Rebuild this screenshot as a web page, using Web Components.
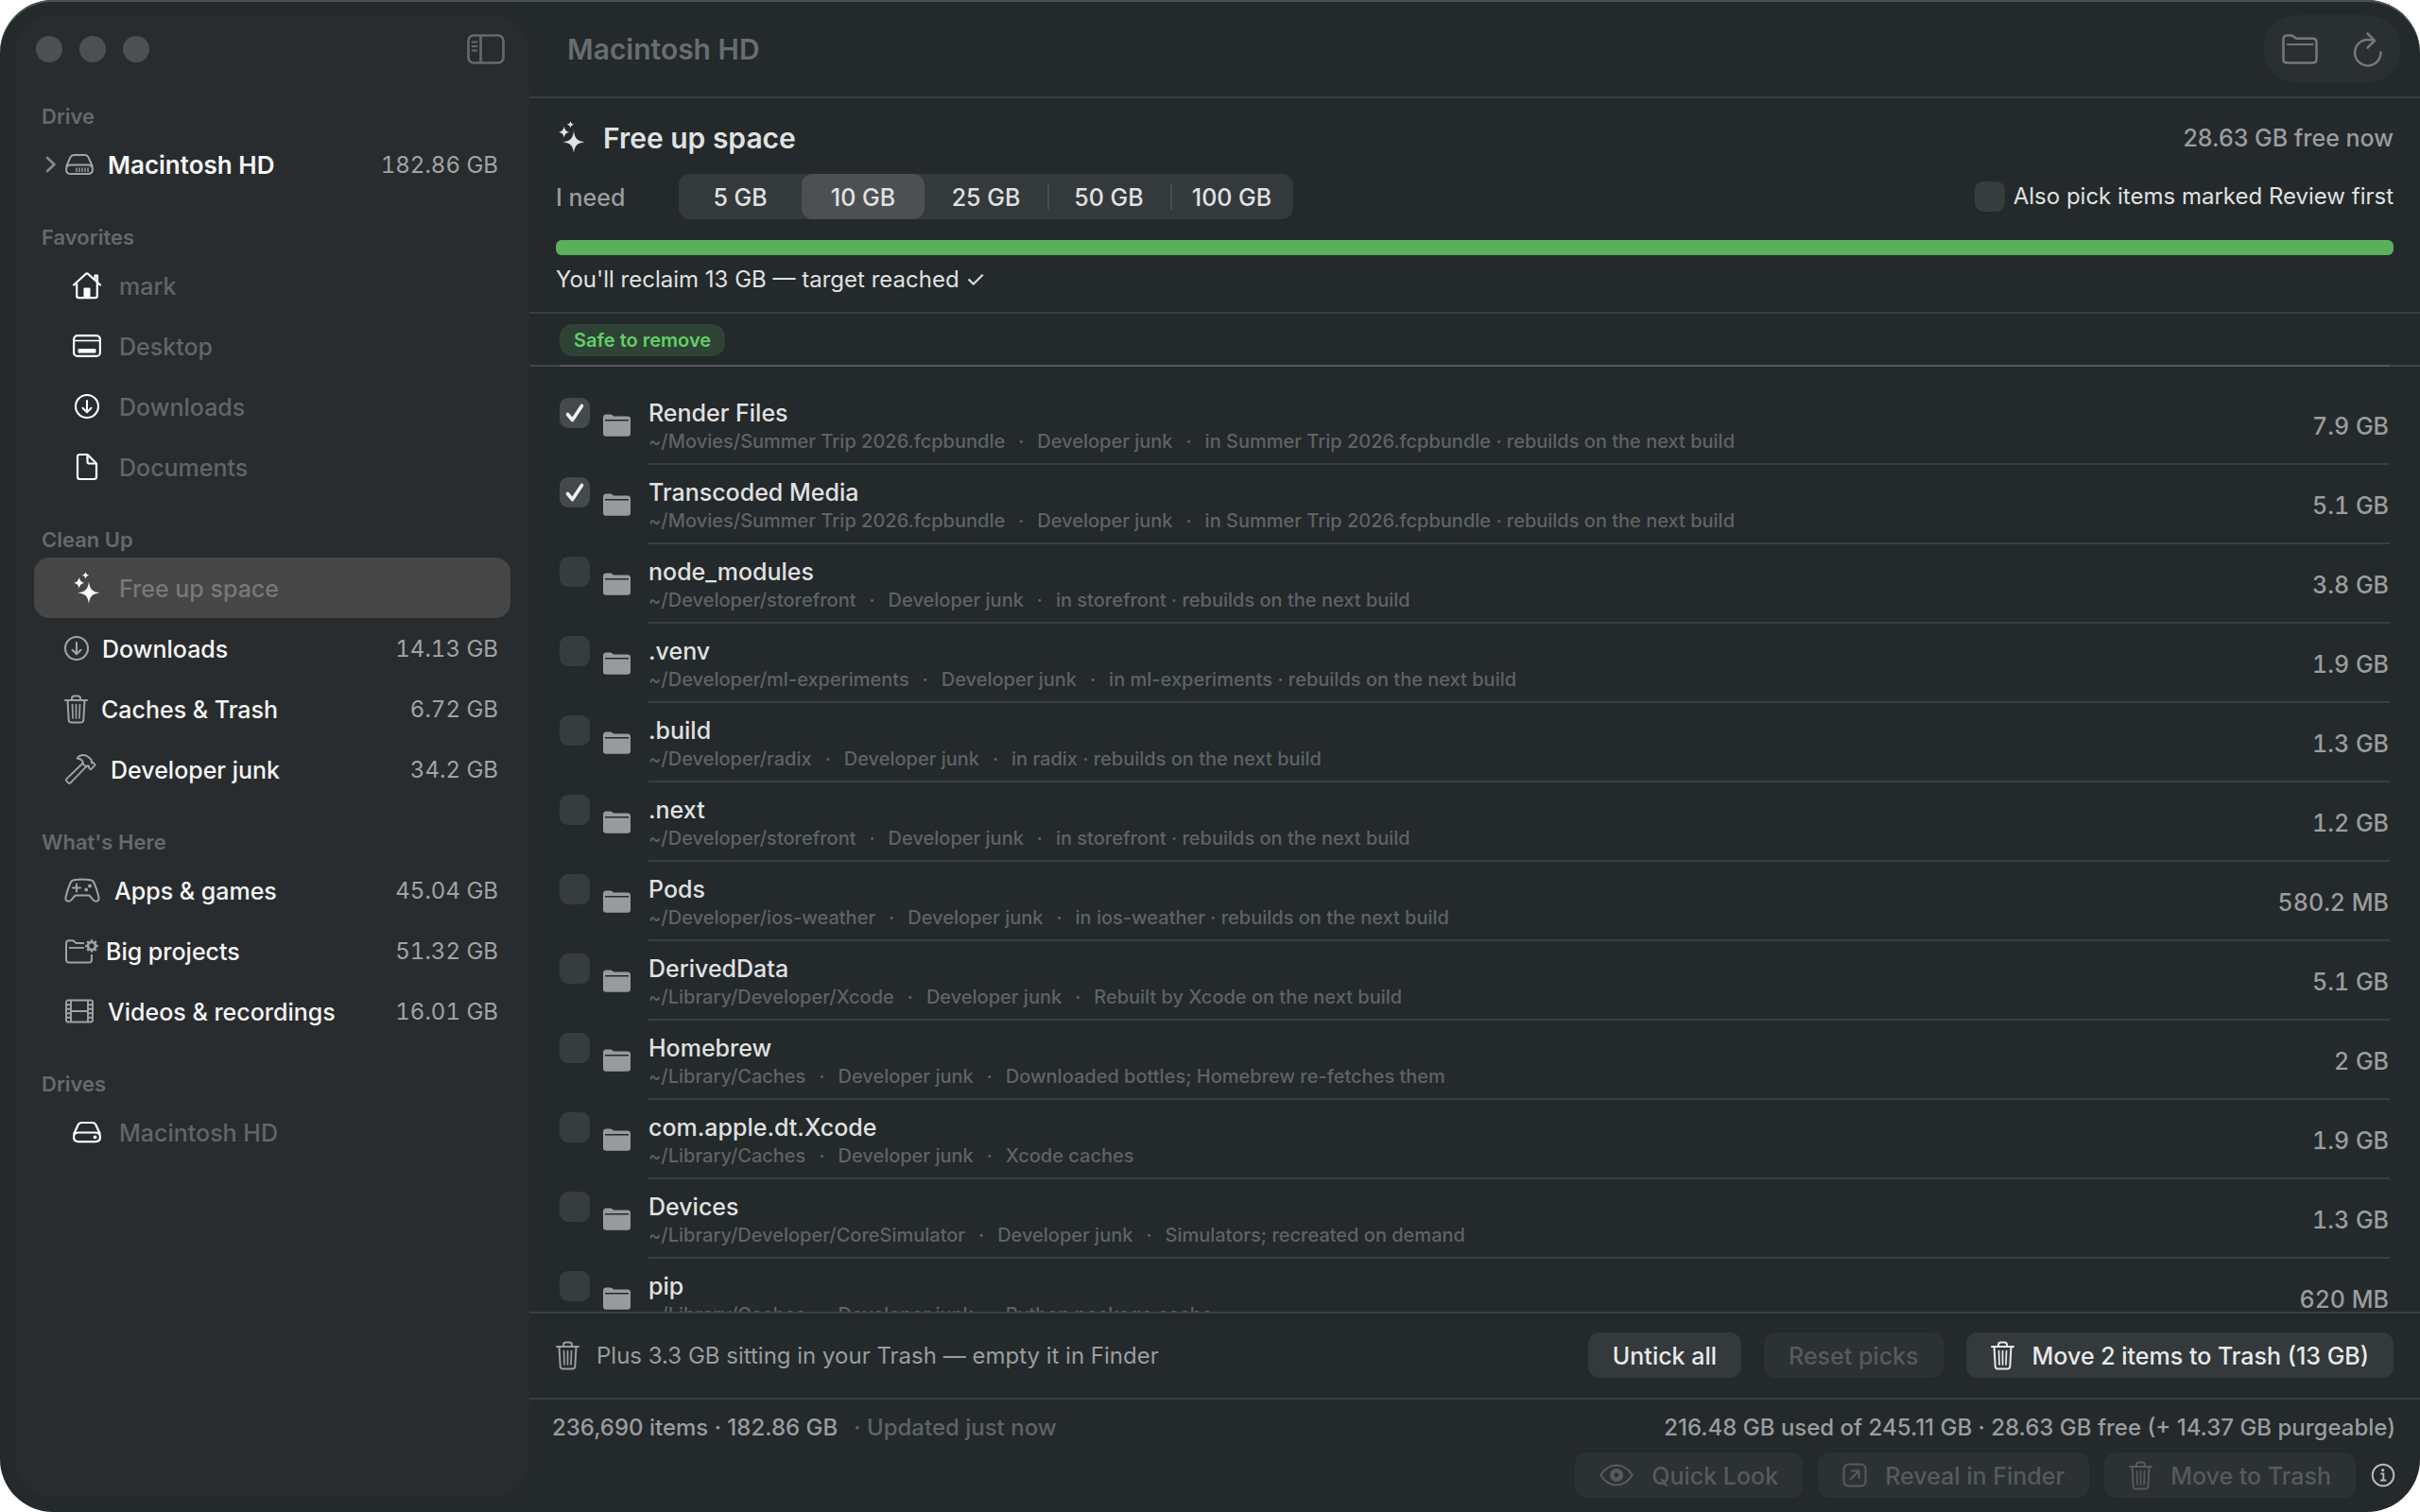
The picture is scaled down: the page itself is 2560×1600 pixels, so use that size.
<!DOCTYPE html>
<html lang="en">
<head>
<meta charset="utf-8">
<title>Macintosh HD</title>
<style>
  :root {
    --bg: #24292b;
    --side: #292c2e;
    --line: #393e41;
    --text: #e0e1e1;
    --second: #9a9d9e;
    --dim: #5f6365;
    --fill: #34393c;
    --fs-title: 30px;
    --fs-body: 25px;
    --fs-small: 24px;
    --fs-caption: 20px;
  }
  body { margin: 0; background: #fff; font-family: Inter, "Liberation Sans", sans-serif; color: var(--text); }
</style>
</head>
<body>
<disk-window></disk-window>

<script>
const ICONS = {
  sidebar: [40, 32, `<g fill="none" stroke="currentColor" stroke-width="2.6"><rect x="1.5" y="1.5" width="37" height="29" rx="5.5"/><path d="M14.5 2v28"/></g><path d="M5.5 8.5h5M5.5 13h5M5.5 17.5h5" stroke="currentColor" stroke-width="1.8" stroke-linecap="round"/>`],
  chevron: [12, 18, `<path d="M2 2l7.5 7L2 16" fill="none" stroke="currentColor" stroke-width="2.8" stroke-linecap="round" stroke-linejoin="round"/>`],
  drive: [32, 24, `<g fill="none" stroke="currentColor" stroke-width="2"><path d="M2 14.5L6.6 4.2Q7.7 2 10 2h12q2.3 0 3.4 2.2L30 14.5"/><path d="M7.2 12.5h17.6q5.2 0 5.2 4.8t-5.2 4.8H7.2Q2 22.1 2 17.3t5.2-4.8z"/></g><path d="M13 15.5v4.5M16 15.5v4.5M19 15.5v4.5M22 15.5v4.5M25 15.5v4.5" stroke="currentColor" stroke-width="1.4"/>`],
  drivedot: [32, 24, `<g fill="none" stroke="currentColor" stroke-width="2.2"><path d="M2 14.5L6.6 4.2Q7.7 2 10 2h12q2.3 0 3.4 2.2L30 14.5"/><path d="M7.2 12.5h17.6q5.2 0 5.2 4.8t-5.2 4.8H7.2Q2 22.1 2 17.3t5.2-4.8z"/></g><circle cx="24.5" cy="17.3" r="1.9" fill="currentColor"/>`],
  house: [32, 30, `<path d="M2 14.5L15 2.7q1-.8 2 0L30 14.5M24.5 9V4.5h2.5V11M5.2 12.5V26q0 2.2 2.2 2.2h17.2q2.2 0 2.2-2.2V12.5" fill="none" stroke="currentColor" stroke-width="2.2" stroke-linecap="round" stroke-linejoin="round"/><path d="M12.5 28V18.5q0-1 1-1h5q1 0 1 1V28z" fill="currentColor"/>`],
  desktop: [32, 26, `<rect x="2.1" y="2.1" width="27.8" height="21.8" rx="4" fill="none" stroke="currentColor" stroke-width="2.2"/><path d="M2 7.5h28" stroke="currentColor" stroke-width="1.6"/><rect x="6.5" y="16" width="19" height="4.5" rx="1" fill="currentColor"/>`],
  down: [26, 28, `<g fill="none" stroke="currentColor" stroke-width="2.1" stroke-linecap="round" stroke-linejoin="round"><circle cx="13" cy="14" r="12"/><path d="M13 8v12M8.5 15.8L13 20.2l4.5-4.4"/></g>`],
  doc: [24, 30, `<g fill="none" stroke="currentColor" stroke-width="2.2" stroke-linejoin="round"><path d="M5 2h7.5L22 11.5V25.5q0 2.5-2.5 2.5H4.5Q2 28 2 25.5V4.5Q2 2 4.5 2z"/><path d="M12.5 2.5v7q0 2 2 2H21.5"/></g>`],
  sparkles: [28, 34, `<g fill="currentColor"><path d="M16 10.5C17 18.5 19.5 21.3 27.8 22.3 19.5 23.5 17 26 16 34 15 26 12.5 23.5 4.2 22.3 12.5 21.3 15 18.5 16 10.5z"/><path d="M5.7 6q.9 5 5.7 5.8Q6.6 12.6 5.7 17.6 4.8 12.6 0 11.8 4.8 11 5.7 6z"/><path d="M12.5 0q.6 3.2 3.7 3.7-3.1.6-3.7 3.8-.6-3.2-3.7-3.8Q11.9 3.2 12.5 0z"/></g>`],
  trash: [25, 31, `<g fill="none" stroke="currentColor" stroke-width="2" stroke-linecap="round" stroke-linejoin="round"><path d="M1 6h23M8 6V4q0-2.5 2.5-2.5h4Q17 1.5 17 4v2M3.5 6l1.2 21q.2 2.5 2.6 2.5h10.4q2.4 0 2.6-2.5L21.5 6"/><path d="M8.5 10.5l.5 14.5M12.5 10.5V25M16.5 10.5L16 25" stroke-width="1.7"/></g>`],
  hammer: [35, 34, `<g fill="none" stroke="currentColor" stroke-width="1.9" stroke-linejoin="round"><path d="M20.5 9.8L2.2 27.4q-.9 1 0 1.9l2.3 2.3q.9.9 1.8 0L23.8 13.6"/><path d="M13.5 5.5Q16 1.8 20.5 2q3 .2 5.2 2.2l3 2.8q.8 1-.2 2l.6 1.4 1.4-.4 2.2 2.3-4.7 5-2.3-2.3.3-1.5-1.6-.4-1.4 1.4-3.8-3.6q1.8-4.2-5.7-5.4z"/></g>`],
  game: [39, 26, `<path d="M10 2.2Q19 .8 28 2.2q2.3.4 3.4 2.8Q35 13 36.5 20.5q.5 4-2.7 4.3-2.3.2-4-2.3l-2.3-2.9q-.8-1-2-1H12.5q-1.2 0-2 1l-2.3 2.9q-1.7 2.5-4 2.3Q1 24.5 1.5 20.5 3 13 6.6 5 7.7 2.6 10 2.2z" fill="none" stroke="currentColor" stroke-width="2"/><path d="M13 6.5v8M9 10.5h8" stroke="currentColor" stroke-width="1.9" stroke-linecap="round"/><circle cx="27" cy="8.5" r="1.9" fill="currentColor"/><circle cx="23.2" cy="12.5" r="1.9" fill="currentColor"/>`],
  foldergear: [30, 28, `<g fill="none" stroke="currentColor" stroke-width="2"><path d="M21 6h-8.5L10.3 4Q9.5 3.2 8.3 3.2H5q-3 0-3 3V23.5q0 3 3 3h21q3 0 3-3V18"/><path d="M5 11h16" stroke-width="1.8"/></g><g transform="translate(29 9)" stroke="currentColor"><circle r="4" fill="none" stroke-width="2.6"/><path d="M0-6.8v2.2M0 4.6v2.2M-6.8 0h2.2M4.6 0h2.2M-4.8-4.8l1.5 1.5M3.3 3.3l1.5 1.5M-4.8 4.8l1.5-1.5M3.3-3.3l1.5-1.5" stroke-width="2.4"/></g>`],
  film: [32, 26, `<g fill="none" stroke="currentColor" stroke-width="1.9"><rect x="2" y="1.5" width="28" height="23" rx="2"/><path d="M7 2v22M25 2v22M7 13h18M2 6.2h5M2 10.7h5M2 15.3h5M2 19.8h5M25 6.2h5M25 10.7h5M25 15.3h5M25 19.8h5"/></g>`],
  folder: [38, 32, `<g fill="none" stroke="currentColor" stroke-width="2.5" stroke-linejoin="round" stroke-linecap="round"><path d="M1.5 5.5q0-4 4-4h4q1.5 0 2.7 1L14 4q1 .8 2.5.8h16q4 0 4 4V26.5q0 4-4 4h-27q-4 0-4-4z"/><path d="M6 11h26.5" stroke-width="2.2"/></g>`],
  refresh: [30, 36, `<g fill="none" stroke="currentColor" stroke-width="2.5" stroke-linecap="round" stroke-linejoin="round"><path d="M28.5 21.5A13.7 13.7 0 1 1 15 8q3.5 0 6.5 1"/><path d="M14.5 1.5l7.5 7.5-7.5 7.5"/></g>`],
  folderfill: [29, 24, `<path d="M0 4Q0 .5 3.2.5h4.3q1.3 0 2.2.8l.8.6q.8.7 2 .7h13.3Q29 2.6 29 6H0zM0 7.6h29V20.5q0 3.2-3.2 3.2H3.2Q0 23.7 0 20.5z" fill="currentColor"/><path d="M0 4v4h2V6h25v2h2V5z" fill="currentColor"/>`],
  check: [22, 22, `<path d="M3.5 12.5l5 6L18.5 3.5" fill="none" stroke="#f2f3f3" stroke-width="3.6" stroke-linecap="round" stroke-linejoin="round"/>`],
  eye: [36, 24, `<path d="M1.3 12Q8 1.5 18 1.5T34.7 12Q28 22.5 18 22.5T1.3 12z" fill="none" stroke="currentColor" stroke-width="2.2"/><path fill-rule="evenodd" d="M18 5a7 7 0 1 1 0 14 7 7 0 0 1 0-14zm0 4.6a2.4 2.4 0 1 0 0 4.8 2.4 2.4 0 0 0 0-4.8z" fill="currentColor"/>`],
  reveal: [26, 26, `<g fill="none" stroke="currentColor" stroke-width="2.1" stroke-linecap="round" stroke-linejoin="round"><rect x="1.5" y="1.5" width="23" height="23" rx="5"/><path d="M8.5 17.5l8.5-8.5M10 8.5h7.5V16"/></g>`],
  info: [26, 26, `<circle cx="13" cy="13" r="11.3" fill="none" stroke="currentColor" stroke-width="2"/><circle cx="12.7" cy="7.7" r="1.6" fill="currentColor"/><path d="M10.5 11.5h2.8v7M10 18.5h6.3" fill="none" stroke="currentColor" stroke-width="1.9"/>`]
};

class Part extends HTMLElement {
  connectedCallback() {
    if (this.shadowRoot) return;
    this.attachShadow({ mode: 'open' }).innerHTML = this.render();
  }
  at(name, fallback = '') { return this.getAttribute(name) ?? fallback; }
}

customElements.define('ui-icon', class extends Part {
  render() {
    const [w, h, body] = ICONS[this.at('name')];
    return `<style>:host{display:block;flex:none}svg{display:block;overflow:visible}</style>
      <svg width="${w}" height="${h}" viewBox="0 0 ${w} ${h}" aria-hidden="true">${body}</svg>`;
  }
});

customElements.define('side-section', class extends Part {
  render() {
    return `<style>
      :host{display:block}
      h2{margin:0;height:58px;padding:0 8px 6px;display:flex;align-items:flex-end;font-size:22px;line-height:26px;font-weight:600;color:#66696b}
      :host([first]) h2{height:48px}
      </style><h2>${this.at('heading')}</h2><slot></slot>`;
  }
});

customElements.define('side-row', class extends Part {
  render() {
    const size = this.at('size');
    return `<style>
      :host{display:block}
      a{display:flex;align-items:center;height:64px;padding-right:13px;border-radius:16px;color:#f5f6f6;text-decoration:none;font-size:var(--fs-body);line-height:32px;font-weight:500;white-space:nowrap}
      .lead{width:32px;padding-left:12px;box-sizing:border-box;color:#85888a}
      .ic{margin-right:14px;color:#a0a3a4}
      .name{flex:1}
      .name,.size{padding-top:2px}
      .size{color:#a0a3a4;font-size:var(--fs-small);font-weight:400;font-variant-numeric:tabular-nums}
      :host([strong]) .name{font-size:26px;font-weight:600}
      :host([place]) .ic{width:48px;margin-right:10px;display:flex;justify-content:center;color:#fff}
      :host([place]) .name{color:#626567}
      :host([current]) a{background:#464646}
      :host([current]) .name{color:#787878}
      </style>
      <a href="#"><span class="lead">${this.hasAttribute('tree') ? '<ui-icon name="chevron"></ui-icon>' : ''}</span>
      <span class="ic"><ui-icon name="${this.at('icon')}"></ui-icon></span>
      <span class="name"><slot></slot></span>${size ? `<span class="size">${size}</span>` : ''}</a>`;
  }
});

customElements.define('side-bar', class extends Part {
  render() {
    return `<style>
      :host{display:flex;flex-direction:column;flex:none;width:544px;box-sizing:border-box;margin:16px 0 16px 16px;padding:0 20px;border-radius:40px;background:var(--side)}
      header{display:flex;align-items:center;height:72px;padding:0 6px 0 2px;color:#66696b}
      .lights{display:flex;gap:18px;flex:1}
      .lights button{width:28px;height:28px;border:0;padding:0;border-radius:50%;background:#4c5053}
      .toggle{border:0;background:none;padding:0;color:inherit}
      </style>
      <header><div class="lights"><button aria-label="Close"></button><button aria-label="Minimize"></button><button aria-label="Zoom"></button></div>
      <button class="toggle" aria-label="Toggle sidebar"><ui-icon name="sidebar"></ui-icon></button></header>
      <nav>
        <side-section heading="Drive" first>
          <side-row icon="drive" size="182.86 GB" tree strong>Macintosh HD</side-row>
        </side-section>
        <side-section heading="Favorites">
          <side-row place icon="house">mark</side-row>
          <side-row place icon="desktop">Desktop</side-row>
          <side-row place icon="down">Downloads</side-row>
          <side-row place icon="doc">Documents</side-row>
        </side-section>
        <side-section heading="Clean Up">
          <side-row place current icon="sparkles">Free up space</side-row>
          <side-row icon="down" size="14.13 GB">Downloads</side-row>
          <side-row icon="trash" size="6.72 GB">Caches &amp; Trash</side-row>
          <side-row icon="hammer" size="34.2 GB">Developer junk</side-row>
        </side-section>
        <side-section heading="What's Here">
          <side-row icon="game" size="45.04 GB">Apps &amp; games</side-row>
          <side-row icon="foldergear" size="51.32 GB">Big projects</side-row>
          <side-row icon="film" size="16.01 GB">Videos &amp; recordings</side-row>
        </side-section>
        <side-section heading="Drives">
          <side-row place icon="drivedot">Macintosh HD</side-row>
        </side-section>
      </nav>`;
  }
});

customElements.define('tick-box', class extends Part {
  render() {
    const on = this.hasAttribute('checked');
    return `<style>
      :host{display:block;flex:none}
      label{display:flex;align-items:center;gap:9px;font-size:var(--fs-small);line-height:30px}
      .box{display:grid;width:32px;height:32px;place-items:center}
      .box>*{grid-area:1/1}
      input{appearance:none;margin:0;width:32px;height:32px;border-radius:9px;background:#373c3f}
      input:checked{background:#44494c}
      ui-icon{pointer-events:none}
      </style><label><span class="box"><input type="checkbox" ${on ? 'checked' : ''} aria-label="${this.at('label', this.textContent)}">${on ? '<ui-icon name="check"></ui-icon>' : ''}</span><slot></slot></label>`;
  }
});

customElements.define('seg-control', class extends Part {
  render() {
    const items = this.at('options').split('|');
    const pick = +this.at('selected');
    return `<style>
      :host{display:flex;height:48px;border-radius:12px;background:var(--fill)}
      label{display:grid;width:130px;place-items:center;font-size:var(--fs-body);line-height:32px;font-weight:500}
      label>*{grid-area:1/1}
      input{appearance:none;margin:0;width:130px;height:48px;border-radius:12px}
      input:checked{background:#4c5052}
      label.cut input{border-radius:0;height:28px;border-left:2px solid #464b4e;box-sizing:border-box}
      span{pointer-events:none;z-index:1;padding-top:2px}
      </style>${items.map((t, i) => `<label class="${i > pick + 1 ? 'cut' : ''}"><input type="radio" name="goal" ${i === pick ? 'checked' : ''}><span>${t}</span></label>`).join('')}`;
  }
});

customElements.define('push-button', class extends Part {
  render() {
    const icon = this.at('icon');
    return `<style>
      :host{display:block;flex:none}
      button{display:flex;align-items:center;height:48px;padding:0 26px;gap:19px;border:0;border-radius:12px;background:var(--fill);color:#e8e9e9;font:500 var(--fs-body)/32px Inter,"Liberation Sans",sans-serif;white-space:nowrap}
      button:disabled{background:#2c3134;color:#565a5d}
      span{padding-top:2px}
      </style><button ${this.hasAttribute('disabled') ? 'disabled' : ''}>${icon ? `<ui-icon name="${icon}"></ui-icon>` : ''}<span><slot></slot></span></button>`;
  }
});

customElements.define('junk-row', class extends Part {
  render() {
    const name = this.at('name');
    return `<style>
      :host{display:flex;height:84px}
      tick-box{margin:13px 14px 0 0}
      .ic{display:flex;align-items:center;height:84px;margin-right:19px;color:#989b9d}
      .body{flex:1;min-width:0;display:flex;align-items:center;box-sizing:border-box;padding-top:3px;border-bottom:2px solid var(--line)}
      .text{flex:1;min-width:0;padding-top:2px;white-space:nowrap;line-height:30px}
      .name{font-size:var(--fs-body);font-weight:500}
      .sub{display:flex;gap:14px;font-size:var(--fs-caption);font-weight:500;color:var(--dim)}
      .size{padding-right:1px;font-size:var(--fs-body);line-height:30px;font-weight:500;color:var(--second);font-variant-numeric:tabular-nums}
      </style>
      <tick-box label="${name}" ${this.hasAttribute('checked') ? 'checked' : ''}></tick-box>
      <span class="ic"><ui-icon name="folderfill"></ui-icon></span>
      <div class="body"><div class="text"><div class="name">${name}</div><div class="sub"><span>${this.at('path')}</span><span>·</span><span>Developer junk</span><span>·</span><span>${this.at('note')}</span></div></div>
      <span class="size">${this.at('size')}</span></div>`;
  }
});

customElements.define('title-bar', class extends Part {
  render() {
    return `<style>
      :host{display:flex;align-items:center;padding:16px 20px 14px 40px;border-bottom:2px solid var(--line);color:#696d70}
      h1{margin:0;flex:1;font-size:var(--fs-title);line-height:36px;font-weight:600}
      .tools{display:flex;align-items:center;height:72px;box-sizing:border-box;gap:38px;padding:0 20px;border-radius:36px;background:#2a2f32}
      button{border:0;background:none;padding:0;color:#74787b}
      </style><h1><slot></slot></h1>
      <div class="tools"><button aria-label="Open folder"><ui-icon name="folder"></ui-icon></button><button aria-label="Rescan"><ui-icon name="refresh"></ui-icon></button></div>`;
  }
});

customElements.define('goal-panel', class extends Part {
  render() {
    return `<style>
      :host{display:block;padding:24px 28px 19px;border-bottom:2px solid var(--line)}
      .row{display:flex;align-items:center}
      .top{height:34px;padding-left:3px;margin-bottom:22px}
      h2{margin:0 0 0 19px;flex:1;font-size:var(--fs-title);line-height:34px;font-weight:600}
      .free,.need{font-size:var(--fs-body);line-height:32px;font-weight:500;color:var(--second)}
      .free,.need,h2{padding-top:2px}
      .need{width:130px}
      .fill{flex:1}
      progress{display:block;appearance:none;width:100%;height:16px;margin:22px 0 11px;border:0;border-radius:6px;overflow:hidden;background:var(--fill)}
      progress::-webkit-progress-bar{background:var(--fill)}
      progress::-webkit-progress-value{background:#5bae5b}
      p{margin:0;font-size:var(--fs-small);line-height:30px}
      </style>
      <div class="row top"><ui-icon name="sparkles"></ui-icon><h2>Free up space</h2><span class="free">28.63 GB free now</span></div>
      <div class="row"><span class="need">I need</span><seg-control options="5 GB|10 GB|25 GB|50 GB|100 GB" selected="1"></seg-control><span class="fill"></span><tick-box>Also pick items marked Review first</tick-box></div>
      <progress max="10" value="10" aria-label="Space picked"></progress>
      <p>You'll reclaim 13 GB — target reached ✓</p>`;
  }
});

const JUNK = [
  ['Render Files', '~/Movies/Summer Trip 2026.fcpbundle', 'in Summer Trip 2026.fcpbundle · rebuilds on the next build', '7.9 GB', 1],
  ['Transcoded Media', '~/Movies/Summer Trip 2026.fcpbundle', 'in Summer Trip 2026.fcpbundle · rebuilds on the next build', '5.1 GB', 1],
  ['node_modules', '~/Developer/storefront', 'in storefront · rebuilds on the next build', '3.8 GB'],
  ['.venv', '~/Developer/ml-experiments', 'in ml-experiments · rebuilds on the next build', '1.9 GB'],
  ['.build', '~/Developer/radix', 'in radix · rebuilds on the next build', '1.3 GB'],
  ['.next', '~/Developer/storefront', 'in storefront · rebuilds on the next build', '1.2 GB'],
  ['Pods', '~/Developer/ios-weather', 'in ios-weather · rebuilds on the next build', '580.2 MB'],
  ['DerivedData', '~/Library/Developer/Xcode', 'Rebuilt by Xcode on the next build', '5.1 GB'],
  ['Homebrew', '~/Library/Caches', 'Downloaded bottles; Homebrew re-fetches them', '2 GB'],
  ['com.apple.dt.Xcode', '~/Library/Caches', 'Xcode caches', '1.9 GB'],
  ['Devices', '~/Library/Developer/CoreSimulator', 'Simulators; recreated on demand', '1.3 GB'],
  ['pip', '~/Library/Caches', 'Python package cache', '620 MB']
];

customElements.define('junk-list', class extends Part {
  render() {
    return `<style>
      :host{display:flex;flex-direction:column;flex:1;min-height:0}
      .head{padding:11px 32px 9px;display:flex}
      .tag{padding:0 15px;border-radius:14px;background:#2e4336;color:#62cf68;font-size:20px;line-height:34px;font-weight:600}
      .rule{flex:none;height:2px;padding:0 32px;background:#3f4446}
      .rule div{height:2px;background:#54595b}
      .rows{flex:1;min-height:0;overflow:hidden;padding:20px 32px 0}
      </style>
      <div class="head"><span class="tag">Safe to remove</span></div><div class="rule"><div></div></div>
      <div class="rows">${JUNK.map(([n, p, d, s, on]) => `<junk-row name="${n}" path="${p}" note="${d}" size="${s}" ${on ? 'checked' : ''}></junk-row>`).join('')}</div>`;
  }
});

customElements.define('action-bar', class extends Part {
  render() {
    return `<style>
      :host{display:flex;align-items:center;gap:24px;padding:20px 28px 21px;border-top:2px solid var(--line)}
      .note{flex:1;display:flex;align-items:center;gap:18px;font-size:var(--fs-small);line-height:30px;color:var(--second)}
      .note span{padding-top:2px}
      </style>
      <div class="note"><ui-icon name="trash"></ui-icon><span>Plus 3.3 GB sitting in your Trash — empty it in Finder</span></div>
      <push-button>Untick all</push-button><push-button disabled>Reset picks</push-button><push-button icon="trash">Move 2 items to Trash (13 GB)</push-button>`;
  }
});

customElements.define('status-bar', class extends Part {
  render() {
    return `<style>
      :host{display:block;padding:15px 26px 15px 24px;border-top:2px solid var(--line);font-size:var(--fs-small);line-height:30px;font-weight:500;color:var(--second)}
      .line{display:flex;gap:17px;margin-bottom:11px}
      .when{flex:1;color:var(--dim)}
      .tools{display:flex;justify-content:flex-end;align-items:center;gap:16px}
      .info{border:0;background:none;padding:0;color:#b5b7b8}
      </style>
      <div class="line"><span>236,690 items · 182.86 GB</span><span class="when">· Updated just now</span><span>216.48 GB used of 245.11 GB · 28.63 GB free (+ 14.37 GB purgeable)</span></div>
      <div class="tools"><push-button icon="eye" disabled>Quick Look</push-button><push-button icon="reveal" disabled>Reveal in Finder</push-button><push-button icon="trash" disabled>Move to Trash</push-button><button class="info" aria-label="Info"><ui-icon name="info"></ui-icon></button></div>`;
  }
});

customElements.define('disk-window', class extends Part {
  render() {
    return `<style>
      :host{display:flex;height:100vh;box-sizing:border-box;border-radius:56px;overflow:hidden;background:var(--bg);box-shadow:inset 0 2px 0 #4a4f51}
      main{flex:1;min-width:0;display:flex;flex-direction:column}
      </style>
      <side-bar></side-bar>
      <main><title-bar>Macintosh HD</title-bar><goal-panel></goal-panel><junk-list></junk-list><action-bar></action-bar><status-bar></status-bar></main>`;
  }
});
</script>
</body>
</html>
